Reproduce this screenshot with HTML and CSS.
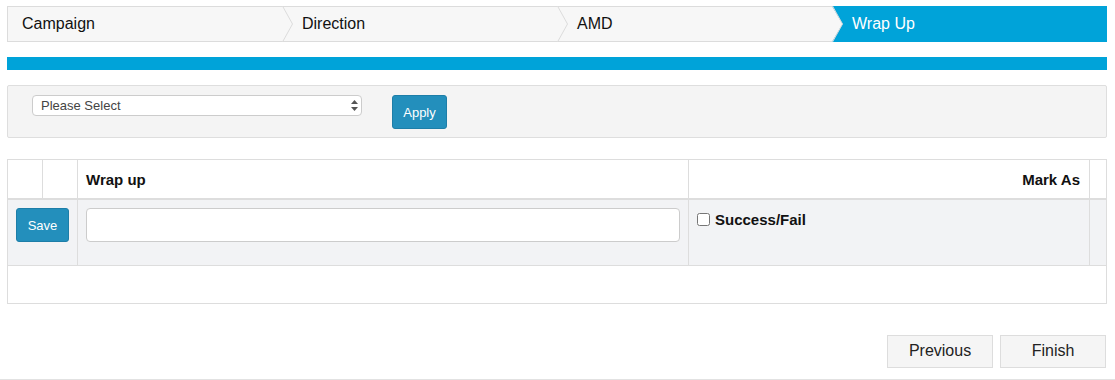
FILE: index.html
```html
<!DOCTYPE html>
<html lang="en">

<head>
  <meta charset="UTF-8" />
  <meta name="viewport" content="width=device-width, initial-scale=1.0" />
  <title>Wrap Up</title>
  <link rel="stylesheet" href="styles.css">
</head>

<body>
  <div class="wizard">
    <div class="steps">
      <div class="step">Campaign
        <svg class="chev" width="12" height="36" viewBox="0 0 12 36"><polygon points="0,0 10.5,18 0,36" fill="#f7f7f7" /><polyline points="0.5,0 10.5,18 0.5,36" fill="none" stroke="#dcdcdc" stroke-width="1" /></svg>
      </div>
      <div class="step">Direction
        <svg class="chev" width="12" height="36" viewBox="0 0 12 36"><polygon points="0,0 10.5,18 0,36" fill="#f7f7f7" /><polyline points="0.5,0 10.5,18 0.5,36" fill="none" stroke="#dcdcdc" stroke-width="1" /></svg>
      </div>
      <div class="step">AMD
        <svg class="chev" width="12" height="36" viewBox="0 0 12 36"><polygon points="0,0 10.5,18 0,36" fill="#f7f7f7" /><polyline points="0.5,0 10.5,18 0.5,36" fill="none" stroke="#dcdcdc" stroke-width="1" /></svg>
      </div>
      <div class="step active">Wrap Up</div>
    </div>

    <div class="progress"></div>

    <div class="filter">
      <div class="select-wrap">
        <select class="filter-select">
          <option>Please Select</option>
        </select>
        <svg class="select-arrows" width="7" height="11" viewBox="0 0 7 11"><polygon points="3.5,0 7,4 0,4" fill="#555" /><polygon points="0,7 7,7 3.5,11" fill="#555" /></svg>
      </div>
      <button class="btn btn-blue btn-apply">Apply</button>
    </div>

    <div class="grid-box">
      <table class="grid">
        <thead>
          <tr>
            <th class="c-narrow"></th>
            <th class="c-narrow"></th>
            <th class="c-wrap">Wrap up</th>
            <th class="c-mark">Mark As</th>
            <th class="c-end"></th>
          </tr>
        </thead>
        <tbody>
          <tr>
            <td colspan="2"><button class="btn btn-blue btn-save">Save</button></td>
            <td><input class="wrap-input" type="text"></td>
            <td><label class="mark"><input type="checkbox"> Success/Fail</label></td>
            <td></td>
          </tr>
        </tbody>
      </table>
    </div>

    <div class="actions">
      <button class="btn btn-plain">Previous</button>
      <button class="btn btn-plain">Finish</button>
    </div>
  </div>
  <div class="rule"></div>
</body>

</html>
```

FILE: styles.css
```css
body {
  margin: 0;
  font-family: "Liberation Sans", Arial, sans-serif;
  color: #111;
}

.wizard {
  padding: 6px 8px 0 7px;
}

.steps {
  display: flex;
  height: 36px;
}

.step {
  flex: 0 0 25%;
  position: relative;
  display: flex;
  align-items: center;
  padding-left: 14px;
  font-size: 16px;
  background: #f7f7f7;
  border-top: 1px solid #dcdcdc;
  border-bottom: 1px solid #dcdcdc;
  box-sizing: border-box;
}

.step:first-child {
  border-left: 1px solid #dcdcdc;
}

.step + .step {
  padding-left: 20px;
}

.step.active {
  background: #00a3d9;
  border-color: #00a3d9;
  color: #fff;
}

.chev {
  position: absolute;
  right: -12px;
  top: -1px;
  z-index: 1;
}

.progress {
  margin-top: 15px;
  height: 13px;
  background: #00a3d9;
}

.filter {
  margin-top: 15px;
  height: 53px;
  box-sizing: border-box;
  background: #f4f4f4;
  border: 1px solid #dedede;
  border-radius: 2px;
  display: flex;
  align-items: flex-start;
  padding: 9px 0 0 24px;
}

.select-wrap {
  position: relative;
}

.filter-select {
  appearance: none;
  -webkit-appearance: none;
  display: block;
  width: 330px;
  height: 21px;
  font-family: inherit;
  font-size: 13px;
  color: #444;
  background: #fff;
  border: 1px solid #ccc;
  border-radius: 4px;
  padding: 0 8px;
}

.select-arrows {
  position: absolute;
  right: 4px;
  top: 5px;
  pointer-events: none;
}

.btn {
  font-family: inherit;
  cursor: pointer;
}

.btn-blue {
  background: #238fbc;
  border: 1px solid #1d7ea8;
  border-radius: 3px;
  color: #fff;
  font-size: 13px;
}

.btn-apply {
  margin-left: 30px;
  width: 55px;
  height: 34px;
}

.grid-box {
  margin-top: 21px;
  border: 1px solid #dddddd;
  padding-bottom: 37px;
}

.grid {
  width: 100%;
  border-collapse: collapse;
  font-size: 15px;
}

.grid th {
  height: 38px;
  padding: 0 8px;
  text-align: left;
  font-weight: bold;
  border-bottom: 2px solid #dddddd;
  border-right: 1px solid #dddddd;
}

.grid th:last-child,
.grid td:last-child {
  border-right: none;
}

.c-narrow {
  width: 18px;
}

.c-wrap {
  width: 594px;
}

.grid th.c-mark {
  text-align: right;
  padding-right: 9px;
}

.c-end {
  width: 0;
}

.grid td {
  background: #f2f3f5;
  height: 66px;
  box-sizing: border-box;
  padding: 8px;
  vertical-align: top;
  border-bottom: 1px solid #dddddd;
  border-right: 1px solid #dddddd;
}

.btn-save {
  width: 53px;
  height: 34px;
}

.wrap-input {
  width: 100%;
  height: 34px;
  box-sizing: border-box;
  border: 1px solid #cccccc;
  border-radius: 4px;
  background: #fff;
}

.mark {
  display: flex;
  align-items: center;
  font-weight: bold;
  padding-top: 3px;
}

.mark input {
  margin: 0 5px 0 0;
  width: 13px;
  height: 13px;
}

.actions {
  display: flex;
  justify-content: flex-end;
  gap: 7px;
  margin-top: 31px;
  padding-right: 1px;
}

.btn-plain {
  width: 106px;
  height: 33px;
  background: #f5f5f5;
  border: 1px solid #dddddd;
  font-size: 16px;
  color: #222;
}

.rule {
  margin-top: 11px;
  border-top: 1px solid #e2e2e2;
}
```
